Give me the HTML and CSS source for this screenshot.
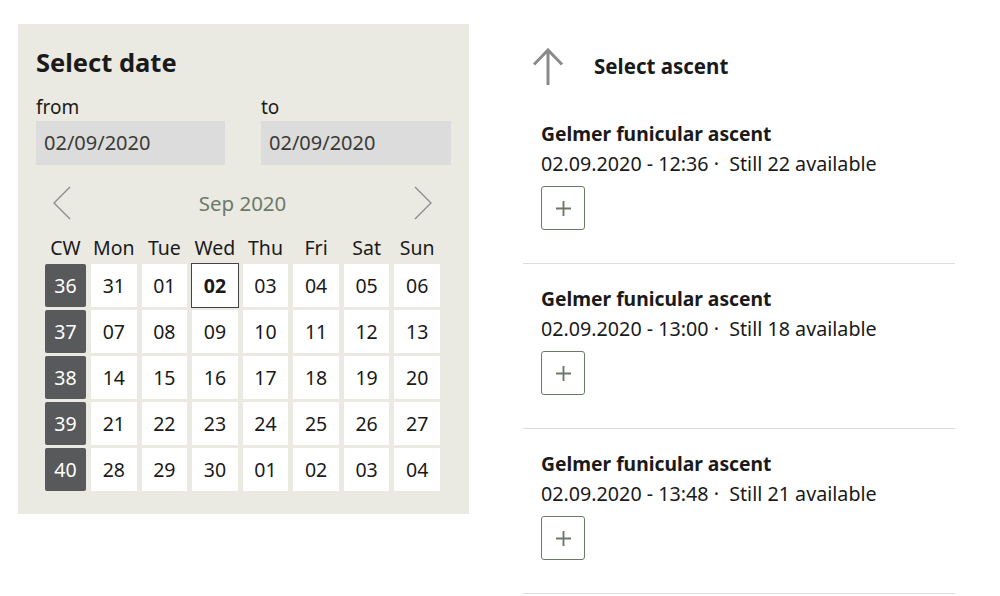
FILE: index.html
```html
<!DOCTYPE html>
<html lang="en">
<head>
<meta charset="utf-8">
<title>Select date</title>
<link rel="stylesheet" href="styles.css">
</head>
<body>
<div class="page">
  <section class="datepanel">
    <h1 class="title">Select date</h1>
    <div class="fields">
      <label class="field">
        <span class="field-label">from</span>
        <span class="field-input">02/09/2020</span>
      </label>
      <label class="field">
        <span class="field-label">to</span>
        <span class="field-input">02/09/2020</span>
      </label>
    </div>
    <div class="calendar">
      <div class="cal-nav">
        <svg class="chev" width="20" height="34" viewBox="0 0 20 34"><path d="M18 1 L2 17 L18 33" fill="none" stroke="#8a8a8a" stroke-width="1.3"/></svg>
        <span class="cal-month">Sep 2020</span>
        <svg class="chev" width="20" height="34" viewBox="0 0 20 34"><path d="M2 1 L18 17 L2 33" fill="none" stroke="#8a8a8a" stroke-width="1.3"/></svg>
      </div>
      <div class="cal-grid">
        <span class="hd">CW</span><span class="hd">Mon</span><span class="hd">Tue</span><span class="hd">Wed</span><span class="hd">Thu</span><span class="hd">Fri</span><span class="hd">Sat</span><span class="hd">Sun</span>
        <span class="cw">36</span><span class="day">31</span><span class="day">01</span><span class="day sel">02</span><span class="day">03</span><span class="day">04</span><span class="day">05</span><span class="day">06</span>
        <span class="cw">37</span><span class="day">07</span><span class="day">08</span><span class="day">09</span><span class="day">10</span><span class="day">11</span><span class="day">12</span><span class="day">13</span>
        <span class="cw">38</span><span class="day">14</span><span class="day">15</span><span class="day">16</span><span class="day">17</span><span class="day">18</span><span class="day">19</span><span class="day">20</span>
        <span class="cw">39</span><span class="day">21</span><span class="day">22</span><span class="day">23</span><span class="day">24</span><span class="day">25</span><span class="day">26</span><span class="day">27</span>
        <span class="cw">40</span><span class="day">28</span><span class="day">29</span><span class="day">30</span><span class="day">01</span><span class="day">02</span><span class="day">03</span><span class="day">04</span>
      </div>
    </div>
  </section>

  <section class="ascent">
    <div class="ascent-head">
      <svg class="up" width="32" height="37" viewBox="0 0 32 37"><path d="M15 2 V37 M1 16.5 L15 2 L29 16.5" fill="none" stroke="#8a8a8a" stroke-width="3"/></svg>
      <h2 class="ascent-title">Select ascent</h2>
    </div>
    <div class="item">
      <div class="item-title">Gelmer funicular ascent</div>
      <div class="item-meta">02.09.2020 - 12:36 ·&nbsp; Still 22 available</div>
      <button class="add" aria-label="Add"><svg width="16" height="16" viewBox="0 0 16 16"><path d="M8 0 V16 M0 8 H16" stroke="#6b7a67" stroke-width="2"/></svg></button>
    </div>
    <div class="item">
      <div class="item-title">Gelmer funicular ascent</div>
      <div class="item-meta">02.09.2020 - 13:00 ·&nbsp; Still 18 available</div>
      <button class="add" aria-label="Add"><svg width="16" height="16" viewBox="0 0 16 16"><path d="M8 0 V16 M0 8 H16" stroke="#6b7a67" stroke-width="2"/></svg></button>
    </div>
    <div class="item">
      <div class="item-title">Gelmer funicular ascent</div>
      <div class="item-meta">02.09.2020 - 13:48 ·&nbsp; Still 21 available</div>
      <button class="add" aria-label="Add"><svg width="16" height="16" viewBox="0 0 16 16"><path d="M8 0 V16 M0 8 H16" stroke="#6b7a67" stroke-width="2"/></svg></button>
    </div>
  </section>
</div>
</body>
</html>
```

FILE: styles.css
```css
* { box-sizing: border-box; }
html, body { margin: 0; padding: 0; background: #fff; }
body {
  font-family: "Noto Sans", "Open Sans", sans-serif;
  color: #1a1a1a;
  font-size: 19px;
}
.page {
  display: flex;
  align-items: flex-start;
  padding: 24px 0 0 18px;
  gap: 54px;
}
.datepanel {
  width: 451px;
  height: 490px;
  background: #eae9e2;
  padding: 22px 18px 0 18px;
}
.title {
  margin: 0;
  font-size: 25.5px;
  font-weight: 700;
  line-height: 32px;
}
.fields {
  display: flex;
  gap: 36px;
  margin-top: 16px;
}
.field { display: flex; flex-direction: column; width: 189px; }
.field + .field { width: 190px; }
.field-label { font-size: 19px; line-height: 27px; }
.field-input {
  display: block;
  height: 44px;
  background: #dcdcdc;
  padding: 0 8px;
  line-height: 44px;
  font-size: 20px;
  color: #3a3a34;
}
.calendar { margin: 20px 0 0 9px; width: 395px; }
.cal-nav {
  display: flex;
  align-items: center;
  justify-content: space-between;
  padding: 0 7px 0 7px;
  height: 36px;
}
.chev { display: block; }
.cal-month { color: #6b7a67; font-size: 20.5px; }
.cal-grid {
  display: grid;
  grid-template-columns: 41px repeat(7, 1fr);
  grid-template-rows: 24px;
  grid-auto-rows: 43px;
  column-gap: 5px;
  row-gap: 3px;
  margin-top: 16px;
}
.cal-grid .hd {
  text-align: center;
  font-size: 19.5px;
  line-height: 24px;
  align-self: end;
  margin-bottom: 1px;
}
.cw, .day {
  display: flex;
  align-items: center;
  justify-content: center;
  font-size: 19.5px;
}
.cw {
  background: #58595b;
  color: #fff;
  border-radius: 2px;
}
.day { background: #fff; color: #1a1a1a; }
.day.sel { font-weight: 700; outline: 1px solid #444; }

.ascent { width: 432px; padding-top: 24px; }
.ascent-head {
  display: flex;
  align-items: center;
  height: 36px;
  padding-left: 10px;
}
.up { display: block; margin-right: 29px; margin-top: 0; }
.ascent-title { margin: 0; font-size: 20.5px; font-weight: 700; }
.item {
  padding: 37px 0 33px 18px;
  border-bottom: 1px solid #dedede;
}
.item + .item { padding-top: 22px; }
.item-title { font-weight: 700; font-size: 19.3px; line-height: 26px; }
.item-meta { font-size: 19.7px; line-height: 26px; margin-top: 4px; }
.add {
  display: flex;
  align-items: center;
  justify-content: center;
  margin-top: 9px;
  width: 44px;
  height: 44px;
  border: 1px solid #6b7a67;
  border-radius: 3px;
  background: #fff;
  padding: 0;
}
.add svg { display: block; width: 15px; height: 15px; }
```
